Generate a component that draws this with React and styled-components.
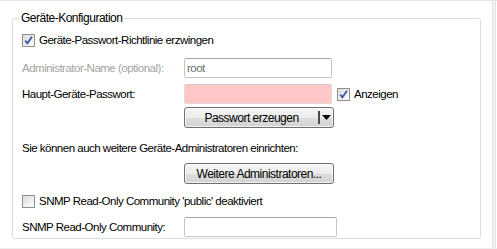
import styled, { createGlobalStyle } from "styled-components";

const Global = createGlobalStyle`
  html, body {
    margin: 0;
    padding: 0;
    background: #ffffff;
  }
  body {
    font-family: "Liberation Sans", Arial, sans-serif;
    font-size: 11.5px;
    letter-spacing: -0.5px;
    color: #000;
  }
`;

const Page = styled.div`
  display: flex;
  width: 497px;
  height: 249px;
  box-sizing: border-box;
  border-top: 1px solid #e6e6e6;
  border-bottom: 1px solid #eeeeee;
`;

const Content = styled.div`
  flex: 1;
  padding: 10px 11px 0 12px;
`;

const Scroll = styled.div`
  width: 2px;
  margin-right: 1px;
  border-left: 1px solid #e2e2e2;
  border-right: 1px solid #e2e2e2;
  background: #f4f4f4;
`;

const Group = styled.fieldset`
  margin: 0;
  height: 228px;
  box-sizing: border-box;
  border: 1px solid #d5dfe5;
  border-radius: 3px;
  padding: 0 10px 0 9px;
`;

const Legend = styled.legend`
  padding: 0 2px;
  margin-left: -3px;
  font-size: 12px;
`;

const Row = styled.div`
  display: flex;
  align-items: center;
  height: ${(p) => p.$h || 20}px;
  margin-top: ${(p) => p.$mt || 0}px;
  margin-left: ${(p) => p.$ml || 0}px;
`;

const Label = styled.div`
  width: 162px;
  flex: none;
  color: ${(p) => (p.$disabled ? "#a3a3a3" : "#000")};
`;

const Input = styled.div`
  box-sizing: border-box;
  width: ${(p) => p.$w || 148}px;
  height: 20px;
  border: 1px solid ${(p) => (p.$pink ? "#e8d6d6" : "#c5c5c5")};
  border-top-color: ${(p) => (p.$pink ? "#dcc4c4" : "#a9a9a9")};
  border-radius: 2px;
  background: ${(p) => (p.$pink ? "#ffc8c8" : "#fff")};
  padding: 1px 2px;
  color: #6d6d6d;
  line-height: 16px;
`;

const Check = styled.span`
  position: relative;
  display: inline-block;
  box-sizing: border-box;
  width: 13px;
  height: 13px;
  flex: none;
  border: 1px solid #8e8f8f;
  background: linear-gradient(135deg, #dcdcdc, #fdfdfd);
  margin-right: 4px;

  svg {
    position: absolute;
    left: 0;
    top: 0;
  }
`;

const CheckLabel = styled.label`
  display: flex;
  align-items: center;
`;

const Button = styled.div`
  box-sizing: border-box;
  display: flex;
  align-items: stretch;
  width: ${(p) => p.$w || 150}px;
  height: 21px;
  border: 1px solid #707070;
  border-radius: 3px;
  background: linear-gradient(#f4f4f4 0%, #ececec 50%, #dedede 51%, #d2d2d2 100%);
  box-shadow: inset 0 0 0 1px rgba(255, 255, 255, 0.7);
  font-size: 12px;
`;

const ButtonText = styled.div`
  flex: 1;
  display: flex;
  align-items: center;
  justify-content: center;
`;

const Split = styled.div`
  width: 13px;
  display: flex;
  align-items: center;
  justify-content: center;
  border-left: 2px solid #4a4a4a;
  margin: 3px 0;
`;

const Spacer = styled.div`
  width: 162px;
  flex: none;
`;

const Tick = () => (
  <svg width="11" height="11" viewBox="0 0 11 11">
    <path d="M2.2 5.6 L4.4 8.2 L9 1.8" fill="none" stroke="#3b54a4" strokeWidth="1.8" />
  </svg>
);

const CheckBox = ({ checked, children }) => (
  <CheckLabel>
    <Check>{checked && <Tick />}</Check>
    {children}
  </CheckLabel>
);

export default function App() {
  return (
    <>
      <Global />
      <Page>
        <Content>
          <Group>
            <Legend>Geräte-Konfiguration</Legend>
            <Row $mt={5}>
              <CheckBox checked>Geräte-Passwort-Richtlinie erzwingen</CheckBox>
            </Row>
            <Row $mt={8}>
              <Label $disabled>Administrator-Name (optional):</Label>
              <Input>root</Input>
            </Row>
            <Row $mt={6}>
              <Label>Haupt-Geräte-Passwort:</Label>
              <Input $pink />
              <Row $ml={5}>
                <CheckBox checked>Anzeigen</CheckBox>
              </Row>
            </Row>
            <Row $mt={3} $h={21}>
              <Spacer />
              <Button>
                <ButtonText>Passwort erzeugen</ButtonText>
                <Split>
                  <svg width="9" height="5" viewBox="0 0 9 5">
                    <path d="M0 0 H9 L4.5 5 Z" fill="#000" />
                  </svg>
                </Split>
              </Button>
            </Row>
            <Row $mt={10}>Sie können auch weitere Geräte-Administratoren einrichten:</Row>
            <Row $mt={5} $h={21}>
              <Spacer />
              <Button>
                <ButtonText>Weitere Administratoren...</ButtonText>
              </Button>
            </Row>
            <Row $mt={7}>
              <CheckBox>SNMP Read-Only Community 'public' deaktiviert</CheckBox>
            </Row>
            <Row $mt={6}>
              <Label>SNMP Read-Only Community:</Label>
              <Input $w={153} />
            </Row>
          </Group>
        </Content>
        <Scroll />
      </Page>
    </>
  );
}
